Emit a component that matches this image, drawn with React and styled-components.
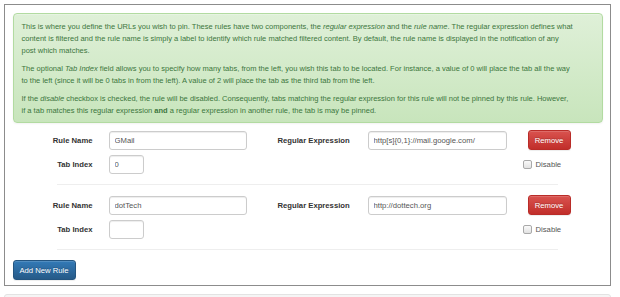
import React from 'react';
import styled, { createGlobalStyle } from 'styled-components';

const GlobalStyle = createGlobalStyle`
  html, body {
    margin: 0;
    padding: 0;
    background: #ffffff;
  }
  body {
    font-family: "Liberation Sans", Arial, sans-serif;
    font-size: 7.7px;
    color: #333333;
  }
`

const Page = styled.div`
  padding: 4px 9px 0 4px;
`

const Frame = styled.div`
  border: 1.5px solid #8c8c8c;
  padding: 8px 7px 5px 7.5px;
`

const Alert = styled.div`
  background: linear-gradient(to bottom, #dff0d8 0%, #c8e5bc 100%);
  border: 1px solid #b2dba1;
  border-radius: 4px;
  box-shadow: inset 0 1px 0 rgba(255,255,255,.25), 0 1px 2px rgba(0,0,0,.05);
  color: #3c763d;
  font-size: 7.52px;
  padding: 7px 4px 5px 8px;
  line-height: 12px;
`

const Para = styled.p`
  margin: 0 0 6px 0;
  &:last-child {
    margin-bottom: 0;
  }
`

const RuleBlock = styled.div`
  display: grid;
  grid-template-columns: 96px 138px 121px 139px 96px;
  row-gap: 5px;
  padding-top: ${p => p.first ? '7px' : '10px'};
`

const Label = styled.label`
  font-weight: bold;
  color: #333333;
  white-space: nowrap;
  display: flex;
  align-items: center;
  justify-content: ${p => p.left ? 'flex-start' : 'flex-end'};
  padding-left: ${p => p.left ? '31px' : '0'};
  margin-right: ${p => p.left ? '0' : '16px'};
  grid-column: ${p => p.col};
`

const Field = styled.input`
  box-sizing: border-box;
  height: 19px;
  width: ${p => p.narrow ? '35px' : '100%'};
  border: 1px solid #cccccc;
  border-radius: 3px;
  box-shadow: inset 0 1px 1px rgba(0,0,0,.075);
  padding: 0 5px;
  font-family: "Liberation Sans", Arial, sans-serif;
  font-size: 7.7px;
  color: #555555;
  background: #ffffff;
  outline: none;
`

const Cell = styled.div`
  grid-column: ${p => p.col};
  display: flex;
  align-items: center;
  padding-left: ${p => p.pad || 0}px;
`

const Button = styled.button`
  box-sizing: border-box;
  height: 20px;
  padding: 0;
  white-space: nowrap;
  border-radius: 3px;
  font-family: "Liberation Sans", Arial, sans-serif;
  font-size: 7.7px;
  color: #ffffff;
  text-shadow: 0 -1px 0 rgba(0,0,0,.2);
  box-shadow: inset 0 1px 0 rgba(255,255,255,.15), 0 1px 1px rgba(0,0,0,.075);
  cursor: pointer;
`

const DangerButton = styled(Button)`
  width: 43px;
  background: linear-gradient(to bottom, #d9534f 0%, #c12e2a 100%);
  border: 1px solid #b92c28;
`

const PrimaryButton = styled(Button)`
  width: 63px;
  background: linear-gradient(to bottom, #337ab7 0%, #265a88 100%);
  border: 1px solid #245580;
`

const Check = styled.span`
  width: 7px;
  height: 7px;
  border: 1px solid #a9a9a9;
  border-radius: 2px;
  background: linear-gradient(to bottom, #fafafa, #e2e2e2);
  margin-right: 4px;
`

const CheckLabel = styled.span`
  color: #555555;
`

const Divider = styled.hr`
  border: 0;
  border-top: 1px solid #eeeeee;
  margin: 10px 45px 0 44px;
`

const Footer = styled.div`
  padding-top: 10px;
`

const Well = styled.div`
  margin-top: 8px;
  height: 12px;
  background: #f5f5f5;
  border: 1px solid #e3e3e3;
  border-radius: 3px;
`

const rules = [
  { name: 'GMail', regex: 'http[s]{0,1}://mail.google.com/', index: '0' },
  { name: 'dotTech', regex: 'http://dottech.org', index: '' },
];

function Rule({ rule, first }) {
  return (
    <>
      <RuleBlock first={first}>
        <Label col="1">Rule Name</Label>
        <Cell col="2"><Field defaultValue={rule.name} /></Cell>
        <Label col="3" left>Regular Expression</Label>
        <Cell col="4"><Field defaultValue={rule.regex} /></Cell>
        <Cell col="5" pad={21}><DangerButton>Remove</DangerButton></Cell>
        <Label col="1">Tab Index</Label>
        <Cell col="2"><Field narrow defaultValue={rule.index} /></Cell>
        <Cell col="5" pad={16}><Check /><CheckLabel>Disable</CheckLabel></Cell>
      </RuleBlock>
      <Divider />
    </>
  );
}

export default function App() {
  return (
    <Page>
      <GlobalStyle />
      <Frame>
        <Alert>
          <Para>
            This is where you define the URLs you wish to pin. These rules have two components, the <em>regular expression</em> and the <em>rule name</em>. The regular expression defines what<br />
            content is filtered and the rule name is simply a label to identify which rule matched filtered content. By default, the rule name is displayed in the notification of any<br />
            post which matches.
          </Para>
          <Para>
            The optional <em>Tab Index</em> field allows you to specify how many tabs, from the left, you wish this tab to be located. For instance, a value of 0 will place the tab all the way<br />
            to the left (since it will be 0 tabs in from the left). A value of 2 will place the tab as the third tab from the left.
          </Para>
          <Para>
            If the <em>disable</em> checkbox is checked, the rule will be disabled. Consequently, tabs matching the regular expression for this rule will not be pinned by this rule. However,<br />
            if a tab matches this regular expression <b>and</b> a regular expression in another rule, the tab is may be pinned.
          </Para>
        </Alert>
        {rules.map((r, i) => <Rule key={i} rule={r} first={i === 0} />)}
        <Footer>
          <PrimaryButton>Add New Rule</PrimaryButton>
        </Footer>
      </Frame>
      <Well />
    </Page>
  );
}
